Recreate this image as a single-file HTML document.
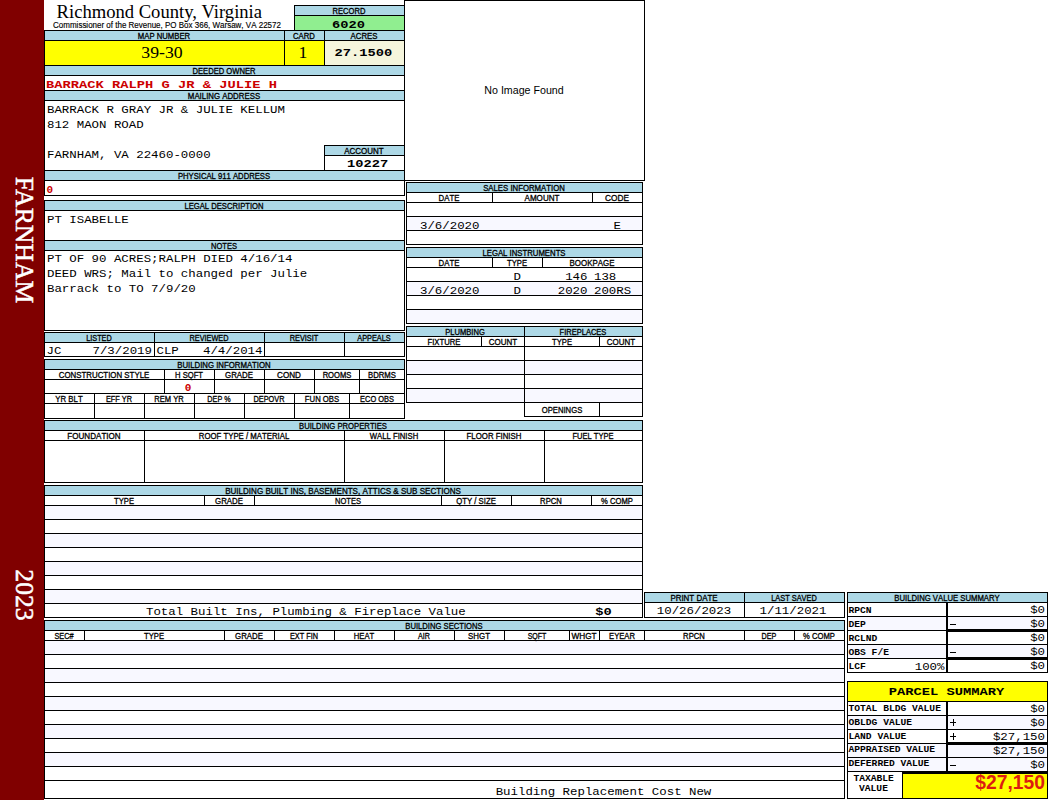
<!DOCTYPE html>
<html><head><meta charset="utf-8"><title>Property Record Card</title>
<style>
html,body{margin:0;padding:0;overflow:hidden;}
body{width:1050px;height:800px;position:relative;overflow:hidden;background:#fff;}
.r,.k,.t{position:absolute;}
.k{background:#000;}
.t{line-height:0;white-space:nowrap;color:#000;}
.s{font-family:"Liberation Sans",sans-serif;font-kerning:none;}
.sb{font-family:"Liberation Sans",sans-serif;font-weight:bold;}
.f{font-family:"Liberation Serif",serif;}
.m{font-family:"Liberation Mono",monospace;}
.mb{font-family:"Liberation Mono",monospace;font-weight:bold;}
</style></head><body>
<div class="r" style="left:0px;top:0px;width:44px;height:800px;background:#800000"></div>
<div class="t f" style="left:24px;top:240.3px;width:0;height:0;color:#fff;font-size:25.7px;"><div style="position:absolute;left:-150px;top:0;width:300px;text-align:center;line-height:0;transform:rotate(90deg);transform-origin:150px 0;white-space:nowrap;-webkit-text-stroke:0.5px #fff">FARNHAM</div></div>
<div class="t f" style="left:24px;top:595px;width:0;height:0;color:#fff;font-size:25.7px;"><div style="position:absolute;left:-150px;top:0;width:300px;text-align:center;line-height:0;transform:rotate(90deg);transform-origin:150px 0;white-space:nowrap;-webkit-text-stroke:0.5px #fff">2023</div></div>
<div class="t f" style="left:-140.7px;width:600px;text-align:center;top:11.72px;font-size:18.6px;">Richmond&nbsp;County,&nbsp;Virginia</div>
<div class="t s" style="left:-133.5px;width:600px;text-align:center;top:24.75px;font-size:8.5px;transform:scale(0.94,1);transform-origin:50% 2.95px;-webkit-text-stroke:0.15px #000;">Commissioner&nbsp;of&nbsp;the&nbsp;Revenue,&nbsp;PO&nbsp;Box&nbsp;366,&nbsp;Warsaw,&nbsp;VA&nbsp;22572</div>
<div class="r" style="left:295px;top:6px;width:109px;height:9px;background:#add8e6"></div>
<div class="r" style="left:295px;top:16px;width:109px;height:14px;background:#90ee90"></div>
<div class="k" style="left:294px;top:5px;width:111px;height:1px"></div>
<div class="k" style="left:294px;top:15px;width:111px;height:1px"></div>
<div class="k" style="left:294px;top:5px;width:1px;height:26px"></div>
<div class="t s" style="left:49.0px;width:600px;text-align:center;top:11.09px;font-size:8.4px;transform:scale(0.907,1);transform-origin:50% 2.91px;-webkit-text-stroke:0.3px #000;">RECORD</div>
<div class="t mb" style="left:48.5px;width:600px;text-align:center;top:24.74px;font-size:13.75px;transform:scale(1,0.8);transform-origin:50% 3.66px;">6020</div>
<div class="r" style="left:45px;top:31px;width:359px;height:9px;background:#add8e6"></div>
<div class="r" style="left:45px;top:41px;width:239px;height:24px;background:#ffff00"></div>
<div class="r" style="left:285px;top:41px;width:39px;height:24px;background:#ffff00"></div>
<div class="r" style="left:325px;top:41px;width:79px;height:24px;background:#f5f5dc"></div>
<div class="k" style="left:44px;top:30px;width:361px;height:1px"></div>
<div class="k" style="left:44px;top:40px;width:361px;height:1px"></div>
<div class="k" style="left:44px;top:65px;width:361px;height:1px"></div>
<div class="k" style="left:284px;top:30px;width:1px;height:36px"></div>
<div class="k" style="left:324px;top:30px;width:1px;height:36px"></div>
<div class="t s" style="left:-136.0px;width:600px;text-align:center;top:36.09px;font-size:8.4px;transform:scale(0.923,1);transform-origin:50% 2.91px;-webkit-text-stroke:0.3px #000;">MAP&nbsp;NUMBER</div>
<div class="t s" style="left:4.0px;width:600px;text-align:center;top:36.09px;font-size:8.4px;transform:scale(0.924,1);transform-origin:50% 2.91px;-webkit-text-stroke:0.3px #000;">CARD</div>
<div class="t s" style="left:64.0px;width:600px;text-align:center;top:36.09px;font-size:8.4px;transform:scale(0.933,1);transform-origin:50% 2.91px;-webkit-text-stroke:0.3px #000;">ACRES</div>
<div class="t f" style="left:-138px;width:600px;text-align:center;top:51.53px;font-size:17.7px;">39-30</div>
<div class="t f" style="left:3px;width:600px;text-align:center;top:51.53px;font-size:17.7px;">1</div>
<div class="t mb" style="left:63.5px;width:600px;text-align:center;top:52.74px;font-size:13.75px;transform:scale(1,0.8);transform-origin:50% 3.66px;">27.1500</div>
<div class="r" style="left:45px;top:66px;width:359px;height:9px;background:#add8e6"></div>
<div class="k" style="left:44px;top:75px;width:361px;height:1px"></div>
<div class="k" style="left:44px;top:90px;width:361px;height:1px"></div>
<div class="t s" style="left:-76.0px;width:600px;text-align:center;top:71.09px;font-size:8.4px;transform:scale(0.909,1);transform-origin:50% 2.91px;-webkit-text-stroke:0.3px #000;">DEEDED&nbsp;OWNER</div>
<div class="t mb" style="left:46px;top:84.74px;font-size:13.75px;transform:scale(1,0.8);transform-origin:0 3.66px;color:#cc0000">BARRACK&nbsp;RALPH&nbsp;G&nbsp;JR&nbsp;&amp;&nbsp;JULIE&nbsp;H</div>
<div class="r" style="left:45px;top:91px;width:359px;height:9px;background:#add8e6"></div>
<div class="k" style="left:44px;top:100px;width:361px;height:1px"></div>
<div class="t s" style="left:-76.0px;width:600px;text-align:center;top:96.09px;font-size:8.4px;transform:scale(0.935,1);transform-origin:50% 2.91px;-webkit-text-stroke:0.3px #000;">MAILING&nbsp;ADDRESS</div>
<div class="t m" style="left:47px;top:109.70px;font-size:12.4px;transform:scale(1,0.95);transform-origin:0 3.30px;">BARRACK&nbsp;R&nbsp;GRAY&nbsp;JR&nbsp;&amp;&nbsp;JULIE&nbsp;KELLUM</div>
<div class="t m" style="left:47px;top:124.70px;font-size:12.4px;transform:scale(1,0.95);transform-origin:0 3.30px;">812&nbsp;MAON&nbsp;ROAD</div>
<div class="t m" style="left:47px;top:154.70px;font-size:12.4px;transform:scale(1,0.95);transform-origin:0 3.30px;">FARNHAM,&nbsp;VA&nbsp;22460-0000</div>
<div class="r" style="left:325px;top:146px;width:79px;height:9px;background:#add8e6"></div>
<div class="k" style="left:324px;top:145px;width:81px;height:1px"></div>
<div class="k" style="left:324px;top:155px;width:81px;height:1px"></div>
<div class="k" style="left:324px;top:145px;width:1px;height:26px"></div>
<div class="t s" style="left:64.0px;width:600px;text-align:center;top:151.09px;font-size:8.4px;transform:scale(0.953,1);transform-origin:50% 2.91px;-webkit-text-stroke:0.3px #000;">ACCOUNT</div>
<div class="t mb" style="left:67.60000000000002px;width:600px;text-align:center;top:164.24px;font-size:13.75px;transform:scale(1,0.8);transform-origin:50% 3.66px;">10227</div>
<div class="r" style="left:45px;top:171px;width:359px;height:9px;background:#add8e6"></div>
<div class="k" style="left:44px;top:170px;width:361px;height:1px"></div>
<div class="k" style="left:44px;top:180px;width:361px;height:1px"></div>
<div class="k" style="left:44px;top:195px;width:361px;height:1px"></div>
<div class="t s" style="left:-76.0px;width:600px;text-align:center;top:176.09px;font-size:8.4px;transform:scale(0.917,1);transform-origin:50% 2.91px;-webkit-text-stroke:0.3px #000;">PHYSICAL&nbsp;911&nbsp;ADDRESS</div>
<div class="t mb" style="left:46.5px;top:189.56px;font-size:11.02px;color:#cc0000">0</div>
<div class="k" style="left:44px;top:30px;width:1px;height:166px"></div>
<div class="k" style="left:404px;top:5px;width:1px;height:191px"></div>
<div class="r" style="left:45px;top:201px;width:359px;height:9px;background:#add8e6"></div>
<div class="r" style="left:45px;top:241px;width:359px;height:9px;background:#add8e6"></div>
<div class="k" style="left:44px;top:200px;width:361px;height:1px"></div>
<div class="k" style="left:44px;top:210px;width:361px;height:1px"></div>
<div class="k" style="left:44px;top:240px;width:361px;height:1px"></div>
<div class="k" style="left:44px;top:250px;width:361px;height:1px"></div>
<div class="k" style="left:44px;top:330px;width:361px;height:1px"></div>
<div class="k" style="left:44px;top:200px;width:1px;height:131px"></div>
<div class="k" style="left:404px;top:200px;width:1px;height:131px"></div>
<div class="t s" style="left:-76.0px;width:600px;text-align:center;top:206.09px;font-size:8.4px;transform:scale(0.915,1);transform-origin:50% 2.91px;-webkit-text-stroke:0.3px #000;">LEGAL&nbsp;DESCRIPTION</div>
<div class="t s" style="left:-76.0px;width:600px;text-align:center;top:246.09px;font-size:8.4px;transform:scale(0.898,1);transform-origin:50% 2.91px;-webkit-text-stroke:0.3px #000;">NOTES</div>
<div class="t m" style="left:47px;top:219.70px;font-size:12.4px;transform:scale(1,0.95);transform-origin:0 3.30px;">PT&nbsp;ISABELLE</div>
<div class="t m" style="left:47px;top:259.30px;font-size:12.4px;transform:scale(1,0.95);transform-origin:0 3.30px;">PT&nbsp;OF&nbsp;90&nbsp;ACRES;RALPH&nbsp;DIED&nbsp;4/16/14</div>
<div class="t m" style="left:47px;top:274.30px;font-size:12.4px;transform:scale(1,0.95);transform-origin:0 3.30px;">DEED&nbsp;WRS;&nbsp;Mail&nbsp;to&nbsp;changed&nbsp;per&nbsp;Julie</div>
<div class="t m" style="left:47px;top:289.30px;font-size:12.4px;transform:scale(1,0.95);transform-origin:0 3.30px;">Barrack&nbsp;to&nbsp;TO&nbsp;7/9/20</div>
<div class="r" style="left:45px;top:333px;width:359px;height:9px;background:#add8e6"></div>
<div class="k" style="left:44px;top:332px;width:361px;height:1px"></div>
<div class="k" style="left:44px;top:342px;width:361px;height:1px"></div>
<div class="k" style="left:44px;top:356px;width:361px;height:1px"></div>
<div class="k" style="left:44px;top:332px;width:1px;height:25px"></div>
<div class="k" style="left:154px;top:332px;width:1px;height:25px"></div>
<div class="k" style="left:264px;top:332px;width:1px;height:25px"></div>
<div class="k" style="left:344px;top:332px;width:1px;height:25px"></div>
<div class="k" style="left:404px;top:332px;width:1px;height:25px"></div>
<div class="t s" style="left:-201.0px;width:600px;text-align:center;top:338.09px;font-size:8.4px;transform:scale(0.87,1);transform-origin:50% 2.91px;-webkit-text-stroke:0.3px #000;">LISTED</div>
<div class="t s" style="left:-91.0px;width:600px;text-align:center;top:338.09px;font-size:8.4px;transform:scale(0.875,1);transform-origin:50% 2.91px;-webkit-text-stroke:0.3px #000;">REVIEWED</div>
<div class="t s" style="left:4.0px;width:600px;text-align:center;top:338.09px;font-size:8.4px;transform:scale(0.881,1);transform-origin:50% 2.91px;-webkit-text-stroke:0.3px #000;">REVISIT</div>
<div class="t s" style="left:74.0px;width:600px;text-align:center;top:338.09px;font-size:8.4px;transform:scale(0.877,1);transform-origin:50% 2.91px;-webkit-text-stroke:0.3px #000;">APPEALS</div>
<div class="t m" style="left:46.5px;top:350.70px;font-size:12.4px;transform:scale(1,0.95);transform-origin:0 3.30px;">JC</div>
<div class="t m" style="left:-448px;width:600px;text-align:right;top:350.70px;font-size:12.4px;transform:scale(1,0.95);transform-origin:100% 3.30px;">7/3/2019</div>
<div class="t m" style="left:156.5px;top:350.70px;font-size:12.4px;transform:scale(1,0.95);transform-origin:0 3.30px;">CLP</div>
<div class="t m" style="left:-337.5px;width:600px;text-align:right;top:350.70px;font-size:12.4px;transform:scale(1,0.95);transform-origin:100% 3.30px;">4/4/2014</div>
<div class="r" style="left:45px;top:360px;width:359px;height:9px;background:#add8e6"></div>
<div class="k" style="left:44px;top:359px;width:361px;height:1px"></div>
<div class="k" style="left:44px;top:369px;width:361px;height:1px"></div>
<div class="k" style="left:44px;top:379px;width:361px;height:1px"></div>
<div class="k" style="left:44px;top:393px;width:361px;height:1px"></div>
<div class="k" style="left:44px;top:403px;width:361px;height:1px"></div>
<div class="k" style="left:44px;top:418px;width:361px;height:1px"></div>
<div class="k" style="left:44px;top:369px;width:1px;height:25px"></div>
<div class="k" style="left:164px;top:369px;width:1px;height:25px"></div>
<div class="k" style="left:214px;top:369px;width:1px;height:25px"></div>
<div class="k" style="left:264px;top:369px;width:1px;height:25px"></div>
<div class="k" style="left:314px;top:369px;width:1px;height:25px"></div>
<div class="k" style="left:359px;top:369px;width:1px;height:25px"></div>
<div class="k" style="left:404px;top:369px;width:1px;height:25px"></div>
<div class="k" style="left:44px;top:393px;width:1px;height:26px"></div>
<div class="k" style="left:94px;top:393px;width:1px;height:26px"></div>
<div class="k" style="left:144px;top:393px;width:1px;height:26px"></div>
<div class="k" style="left:194px;top:393px;width:1px;height:26px"></div>
<div class="k" style="left:244px;top:393px;width:1px;height:26px"></div>
<div class="k" style="left:294px;top:393px;width:1px;height:26px"></div>
<div class="k" style="left:349px;top:393px;width:1px;height:26px"></div>
<div class="k" style="left:404px;top:393px;width:1px;height:26px"></div>
<div class="k" style="left:44px;top:359px;width:1px;height:60px"></div>
<div class="k" style="left:404px;top:359px;width:1px;height:60px"></div>
<div class="t s" style="left:-76.0px;width:600px;text-align:center;top:365.09px;font-size:8.4px;transform:scale(0.93,1);transform-origin:50% 2.91px;-webkit-text-stroke:0.3px #000;">BUILDING&nbsp;INFORMATION</div>
<div class="t s" style="left:-196.0px;width:600px;text-align:center;top:375.09px;font-size:8.4px;transform:scale(0.94,1);transform-origin:50% 2.91px;-webkit-text-stroke:0.3px #000;">CONSTRUCTION&nbsp;STYLE</div>
<div class="t s" style="left:-111.0px;width:600px;text-align:center;top:375.09px;font-size:8.4px;transform:scale(0.909,1);transform-origin:50% 2.91px;-webkit-text-stroke:0.3px #000;">H&nbsp;SQFT</div>
<div class="t s" style="left:-61.0px;width:600px;text-align:center;top:375.09px;font-size:8.4px;transform:scale(0.937,1);transform-origin:50% 2.91px;-webkit-text-stroke:0.3px #000;">GRADE</div>
<div class="t s" style="left:-11.0px;width:600px;text-align:center;top:375.09px;font-size:8.4px;transform:scale(0.97,1);transform-origin:50% 2.91px;-webkit-text-stroke:0.3px #000;">COND</div>
<div class="t s" style="left:36.5px;width:600px;text-align:center;top:375.09px;font-size:8.4px;transform:scale(0.908,1);transform-origin:50% 2.91px;-webkit-text-stroke:0.3px #000;">ROOMS</div>
<div class="t s" style="left:81.5px;width:600px;text-align:center;top:375.09px;font-size:8.4px;transform:scale(0.923,1);transform-origin:50% 2.91px;-webkit-text-stroke:0.3px #000;">BDRMS</div>
<div class="t s" style="left:-231.0px;width:600px;text-align:center;top:399.09px;font-size:8.4px;transform:scale(0.931,1);transform-origin:50% 2.91px;-webkit-text-stroke:0.3px #000;">YR&nbsp;BLT</div>
<div class="t s" style="left:-181.0px;width:600px;text-align:center;top:399.09px;font-size:8.4px;transform:scale(0.875,1);transform-origin:50% 2.91px;-webkit-text-stroke:0.3px #000;">EFF&nbsp;YR</div>
<div class="t s" style="left:-131.0px;width:600px;text-align:center;top:399.09px;font-size:8.4px;transform:scale(0.898,1);transform-origin:50% 2.91px;-webkit-text-stroke:0.3px #000;">REM&nbsp;YR</div>
<div class="t s" style="left:-81.0px;width:600px;text-align:center;top:399.09px;font-size:8.4px;transform:scale(0.862,1);transform-origin:50% 2.91px;-webkit-text-stroke:0.3px #000;">DEP&nbsp;%</div>
<div class="t s" style="left:-31.0px;width:600px;text-align:center;top:399.09px;font-size:8.4px;transform:scale(0.879,1);transform-origin:50% 2.91px;-webkit-text-stroke:0.3px #000;">DEPOVR</div>
<div class="t s" style="left:21.5px;width:600px;text-align:center;top:399.09px;font-size:8.4px;transform:scale(0.921,1);transform-origin:50% 2.91px;-webkit-text-stroke:0.3px #000;">FUN&nbsp;OBS</div>
<div class="t s" style="left:76.5px;width:600px;text-align:center;top:399.09px;font-size:8.4px;transform:scale(0.888,1);transform-origin:50% 2.91px;-webkit-text-stroke:0.3px #000;">ECO&nbsp;OBS</div>
<div class="t mb" style="left:-112px;width:600px;text-align:center;top:387.56px;font-size:11.02px;color:#cc0000">0</div>
<div class="r" style="left:45px;top:421px;width:597px;height:9px;background:#add8e6"></div>
<div class="k" style="left:44px;top:420px;width:599px;height:1px"></div>
<div class="k" style="left:44px;top:430px;width:599px;height:1px"></div>
<div class="k" style="left:44px;top:440px;width:599px;height:1px"></div>
<div class="k" style="left:44px;top:482px;width:599px;height:1px"></div>
<div class="k" style="left:44px;top:420px;width:1px;height:63px"></div>
<div class="k" style="left:642px;top:420px;width:1px;height:63px"></div>
<div class="k" style="left:144px;top:430px;width:1px;height:53px"></div>
<div class="k" style="left:344px;top:430px;width:1px;height:53px"></div>
<div class="k" style="left:444px;top:430px;width:1px;height:53px"></div>
<div class="k" style="left:544px;top:430px;width:1px;height:53px"></div>
<div class="t s" style="left:43.0px;width:600px;text-align:center;top:426.09px;font-size:8.4px;transform:scale(0.917,1);transform-origin:50% 2.91px;-webkit-text-stroke:0.3px #000;">BUILDING&nbsp;PROPERTIES</div>
<div class="t s" style="left:-206.0px;width:600px;text-align:center;top:436.09px;font-size:8.4px;transform:scale(0.962,1);transform-origin:50% 2.91px;-webkit-text-stroke:0.3px #000;">FOUNDATION</div>
<div class="t s" style="left:-56.0px;width:600px;text-align:center;top:436.09px;font-size:8.4px;transform:scale(0.93,1);transform-origin:50% 2.91px;-webkit-text-stroke:0.3px #000;">ROOF&nbsp;TYPE&nbsp;/&nbsp;MATERIAL</div>
<div class="t s" style="left:94.0px;width:600px;text-align:center;top:436.09px;font-size:8.4px;transform:scale(0.921,1);transform-origin:50% 2.91px;-webkit-text-stroke:0.3px #000;">WALL&nbsp;FINISH</div>
<div class="t s" style="left:194.0px;width:600px;text-align:center;top:436.09px;font-size:8.4px;transform:scale(0.935,1);transform-origin:50% 2.91px;-webkit-text-stroke:0.3px #000;">FLOOR&nbsp;FINISH</div>
<div class="t s" style="left:293.0px;width:600px;text-align:center;top:436.09px;font-size:8.4px;transform:scale(0.899,1);transform-origin:50% 2.91px;-webkit-text-stroke:0.3px #000;">FUEL&nbsp;TYPE</div>
<div class="r" style="left:45px;top:486px;width:597px;height:9px;background:#add8e6"></div>
<div class="r" style="left:45px;top:506px;width:597px;height:13px;background:#f8f8ff"></div>
<div class="r" style="left:45px;top:534px;width:597px;height:13px;background:#f8f8ff"></div>
<div class="r" style="left:45px;top:562px;width:597px;height:13px;background:#f8f8ff"></div>
<div class="r" style="left:45px;top:590px;width:597px;height:13px;background:#f8f8ff"></div>
<div class="k" style="left:44px;top:485px;width:599px;height:1px"></div>
<div class="k" style="left:44px;top:495px;width:599px;height:1px"></div>
<div class="k" style="left:44px;top:505px;width:599px;height:1px"></div>
<div class="k" style="left:44px;top:519px;width:599px;height:1px"></div>
<div class="k" style="left:44px;top:533px;width:599px;height:1px"></div>
<div class="k" style="left:44px;top:547px;width:599px;height:1px"></div>
<div class="k" style="left:44px;top:561px;width:599px;height:1px"></div>
<div class="k" style="left:44px;top:575px;width:599px;height:1px"></div>
<div class="k" style="left:44px;top:589px;width:599px;height:1px"></div>
<div class="k" style="left:44px;top:603px;width:599px;height:1px"></div>
<div class="k" style="left:44px;top:617px;width:599px;height:1px"></div>
<div class="k" style="left:44px;top:485px;width:1px;height:133px"></div>
<div class="k" style="left:642px;top:485px;width:1px;height:133px"></div>
<div class="k" style="left:204px;top:495px;width:1px;height:11px"></div>
<div class="k" style="left:254px;top:495px;width:1px;height:11px"></div>
<div class="k" style="left:441px;top:495px;width:1px;height:11px"></div>
<div class="k" style="left:511px;top:495px;width:1px;height:11px"></div>
<div class="k" style="left:591px;top:495px;width:1px;height:11px"></div>
<div class="t s" style="left:43.0px;width:600px;text-align:center;top:491.09px;font-size:8.4px;transform:scale(0.961,1);transform-origin:50% 2.91px;-webkit-text-stroke:0.3px #000;">BUILDING&nbsp;BUILT&nbsp;INS,&nbsp;BASEMENTS,&nbsp;ATTICS&nbsp;&amp;&nbsp;SUB&nbsp;SECTIONS</div>
<div class="t s" style="left:-176.0px;width:600px;text-align:center;top:501.09px;font-size:8.4px;transform:scale(0.912,1);transform-origin:50% 2.91px;-webkit-text-stroke:0.3px #000;">TYPE</div>
<div class="t s" style="left:-71.0px;width:600px;text-align:center;top:501.09px;font-size:8.4px;transform:scale(0.937,1);transform-origin:50% 2.91px;-webkit-text-stroke:0.3px #000;">GRADE</div>
<div class="t s" style="left:47.5px;width:600px;text-align:center;top:501.09px;font-size:8.4px;transform:scale(0.898,1);transform-origin:50% 2.91px;-webkit-text-stroke:0.3px #000;">NOTES</div>
<div class="t s" style="left:176.0px;width:600px;text-align:center;top:501.09px;font-size:8.4px;transform:scale(0.925,1);transform-origin:50% 2.91px;-webkit-text-stroke:0.3px #000;">QTY&nbsp;/&nbsp;SIZE</div>
<div class="t s" style="left:251.0px;width:600px;text-align:center;top:501.09px;font-size:8.4px;transform:scale(0.916,1);transform-origin:50% 2.91px;-webkit-text-stroke:0.3px #000;">RPCN</div>
<div class="t s" style="left:316.5px;width:600px;text-align:center;top:501.09px;font-size:8.4px;transform:scale(0.914,1);transform-origin:50% 2.91px;-webkit-text-stroke:0.3px #000;">%&nbsp;COMP</div>
<div class="t m" style="left:146px;top:611.70px;font-size:12.4px;transform:scale(1,0.95);transform-origin:0 3.30px;">Total&nbsp;Built&nbsp;Ins,&nbsp;Plumbing&nbsp;&amp;&nbsp;Fireplace&nbsp;Value</div>
<div class="t mb" style="left:303.6px;width:600px;text-align:center;top:611.74px;font-size:13.75px;transform:scale(1,0.8);transform-origin:50% 3.66px;">$0</div>
<div class="k" style="left:404px;top:0px;width:241px;height:1px"></div>
<div class="k" style="left:404px;top:180px;width:241px;height:1px"></div>
<div class="k" style="left:404px;top:0px;width:1px;height:181px"></div>
<div class="k" style="left:644px;top:0px;width:1px;height:181px"></div>
<div class="t s" style="left:224px;width:600px;text-align:center;top:90.30px;font-size:10.67px;">No&nbsp;Image&nbsp;Found</div>
<div class="r" style="left:407px;top:183px;width:235px;height:9px;background:#add8e6"></div>
<div class="r" style="left:407px;top:217px;width:235px;height:13px;background:#f8f8ff"></div>
<div class="k" style="left:406px;top:182px;width:237px;height:1px"></div>
<div class="k" style="left:406px;top:192px;width:237px;height:1px"></div>
<div class="k" style="left:406px;top:202px;width:237px;height:1px"></div>
<div class="k" style="left:406px;top:216px;width:237px;height:1px"></div>
<div class="k" style="left:406px;top:230px;width:237px;height:1px"></div>
<div class="k" style="left:406px;top:244px;width:237px;height:1px"></div>
<div class="k" style="left:406px;top:182px;width:1px;height:63px"></div>
<div class="k" style="left:642px;top:182px;width:1px;height:63px"></div>
<div class="k" style="left:492px;top:192px;width:1px;height:11px"></div>
<div class="k" style="left:592px;top:192px;width:1px;height:11px"></div>
<div class="t s" style="left:224.0px;width:600px;text-align:center;top:188.09px;font-size:8.4px;transform:scale(0.929,1);transform-origin:50% 2.91px;-webkit-text-stroke:0.3px #000;">SALES&nbsp;INFORMATION</div>
<div class="t s" style="left:149.0px;width:600px;text-align:center;top:198.09px;font-size:8.4px;transform:scale(0.932,1);transform-origin:50% 2.91px;-webkit-text-stroke:0.3px #000;">DATE</div>
<div class="t s" style="left:242.0px;width:600px;text-align:center;top:198.09px;font-size:8.4px;transform:scale(0.962,1);transform-origin:50% 2.91px;-webkit-text-stroke:0.3px #000;">AMOUNT</div>
<div class="t s" style="left:317.0px;width:600px;text-align:center;top:198.09px;font-size:8.4px;transform:scale(0.989,1);transform-origin:50% 2.91px;-webkit-text-stroke:0.3px #000;">CODE</div>
<div class="t m" style="left:420px;top:225.70px;font-size:12.4px;transform:scale(1,0.95);transform-origin:0 3.30px;">3/6/2020</div>
<div class="t m" style="left:613.5px;top:225.70px;font-size:12.4px;transform:scale(1,0.95);transform-origin:0 3.30px;">E</div>
<div class="r" style="left:407px;top:248px;width:235px;height:9px;background:#add8e6"></div>
<div class="r" style="left:407px;top:282px;width:235px;height:13px;background:#f8f8ff"></div>
<div class="r" style="left:407px;top:310px;width:235px;height:13px;background:#f8f8ff"></div>
<div class="k" style="left:406px;top:247px;width:237px;height:1px"></div>
<div class="k" style="left:406px;top:257px;width:237px;height:1px"></div>
<div class="k" style="left:406px;top:267px;width:237px;height:1px"></div>
<div class="k" style="left:406px;top:281px;width:237px;height:1px"></div>
<div class="k" style="left:406px;top:295px;width:237px;height:1px"></div>
<div class="k" style="left:406px;top:309px;width:237px;height:1px"></div>
<div class="k" style="left:406px;top:323px;width:237px;height:1px"></div>
<div class="k" style="left:406px;top:247px;width:1px;height:77px"></div>
<div class="k" style="left:642px;top:247px;width:1px;height:77px"></div>
<div class="k" style="left:492px;top:257px;width:1px;height:11px"></div>
<div class="k" style="left:542px;top:257px;width:1px;height:11px"></div>
<div class="t s" style="left:224.0px;width:600px;text-align:center;top:253.09px;font-size:8.4px;transform:scale(0.925,1);transform-origin:50% 2.91px;-webkit-text-stroke:0.3px #000;">LEGAL&nbsp;INSTRUMENTS</div>
<div class="t s" style="left:149.0px;width:600px;text-align:center;top:263.09px;font-size:8.4px;transform:scale(0.932,1);transform-origin:50% 2.91px;-webkit-text-stroke:0.3px #000;">DATE</div>
<div class="t s" style="left:217.0px;width:600px;text-align:center;top:263.09px;font-size:8.4px;transform:scale(0.912,1);transform-origin:50% 2.91px;-webkit-text-stroke:0.3px #000;">TYPE</div>
<div class="t s" style="left:292.0px;width:600px;text-align:center;top:263.09px;font-size:8.4px;transform:scale(0.945,1);transform-origin:50% 2.91px;-webkit-text-stroke:0.3px #000;">BOOKPAGE</div>
<div class="t m" style="left:513.5px;top:276.70px;font-size:12.4px;transform:scale(1,0.95);transform-origin:0 3.30px;">D</div>
<div class="t m" style="left:-12.5px;width:600px;text-align:right;top:276.70px;font-size:12.4px;transform:scale(1,0.95);transform-origin:100% 3.30px;">146</div>
<div class="t m" style="left:594px;top:276.70px;font-size:12.4px;transform:scale(1,0.95);transform-origin:0 3.30px;">138</div>
<div class="t m" style="left:420px;top:290.70px;font-size:12.4px;transform:scale(1,0.95);transform-origin:0 3.30px;">3/6/2020</div>
<div class="t m" style="left:513.5px;top:290.70px;font-size:12.4px;transform:scale(1,0.95);transform-origin:0 3.30px;">D</div>
<div class="t m" style="left:-12.5px;width:600px;text-align:right;top:290.70px;font-size:12.4px;transform:scale(1,0.95);transform-origin:100% 3.30px;">2020</div>
<div class="t m" style="left:594px;top:290.70px;font-size:12.4px;transform:scale(1,0.95);transform-origin:0 3.30px;">200RS</div>
<div class="r" style="left:407px;top:327px;width:235px;height:9px;background:#add8e6"></div>
<div class="r" style="left:407px;top:361px;width:235px;height:13px;background:#f8f8ff"></div>
<div class="r" style="left:407px;top:389px;width:235px;height:13px;background:#f8f8ff"></div>
<div class="k" style="left:406px;top:326px;width:237px;height:1px"></div>
<div class="k" style="left:406px;top:336px;width:237px;height:1px"></div>
<div class="k" style="left:406px;top:346px;width:237px;height:1px"></div>
<div class="k" style="left:406px;top:360px;width:237px;height:1px"></div>
<div class="k" style="left:406px;top:374px;width:237px;height:1px"></div>
<div class="k" style="left:406px;top:388px;width:237px;height:1px"></div>
<div class="k" style="left:406px;top:402px;width:237px;height:1px"></div>
<div class="k" style="left:524px;top:416px;width:119px;height:1px"></div>
<div class="k" style="left:406px;top:326px;width:1px;height:77px"></div>
<div class="k" style="left:524px;top:326px;width:1px;height:91px"></div>
<div class="k" style="left:642px;top:326px;width:1px;height:91px"></div>
<div class="k" style="left:481px;top:336px;width:1px;height:11px"></div>
<div class="k" style="left:599px;top:336px;width:1px;height:11px"></div>
<div class="k" style="left:599px;top:402px;width:1px;height:15px"></div>
<div class="t s" style="left:165.0px;width:600px;text-align:center;top:332.09px;font-size:8.4px;transform:scale(0.905,1);transform-origin:50% 2.91px;-webkit-text-stroke:0.3px #000;">PLUMBING</div>
<div class="t s" style="left:283.0px;width:600px;text-align:center;top:332.09px;font-size:8.4px;transform:scale(0.897,1);transform-origin:50% 2.91px;-webkit-text-stroke:0.3px #000;">FIREPLACES</div>
<div class="t s" style="left:143.5px;width:600px;text-align:center;top:342.09px;font-size:8.4px;transform:scale(0.921,1);transform-origin:50% 2.91px;-webkit-text-stroke:0.3px #000;">FIXTURE</div>
<div class="t s" style="left:202.5px;width:600px;text-align:center;top:342.09px;font-size:8.4px;transform:scale(0.951,1);transform-origin:50% 2.91px;-webkit-text-stroke:0.3px #000;">COUNT</div>
<div class="t s" style="left:261.5px;width:600px;text-align:center;top:342.09px;font-size:8.4px;transform:scale(0.912,1);transform-origin:50% 2.91px;-webkit-text-stroke:0.3px #000;">TYPE</div>
<div class="t s" style="left:320.5px;width:600px;text-align:center;top:342.09px;font-size:8.4px;transform:scale(0.951,1);transform-origin:50% 2.91px;-webkit-text-stroke:0.3px #000;">COUNT</div>
<div class="t s" style="left:261.5px;width:600px;text-align:center;top:409.59px;font-size:8.4px;transform:scale(0.916,1);transform-origin:50% 2.91px;-webkit-text-stroke:0.3px #000;">OPENINGS</div>
<div class="r" style="left:645px;top:593px;width:199px;height:9px;background:#add8e6"></div>
<div class="k" style="left:644px;top:592px;width:201px;height:1px"></div>
<div class="k" style="left:644px;top:602px;width:201px;height:1px"></div>
<div class="k" style="left:644px;top:617px;width:201px;height:1px"></div>
<div class="k" style="left:644px;top:592px;width:1px;height:26px"></div>
<div class="k" style="left:744px;top:592px;width:1px;height:26px"></div>
<div class="k" style="left:844px;top:592px;width:1px;height:26px"></div>
<div class="t s" style="left:394.0px;width:600px;text-align:center;top:598.09px;font-size:8.4px;transform:scale(0.948,1);transform-origin:50% 2.91px;-webkit-text-stroke:0.3px #000;">PRINT&nbsp;DATE</div>
<div class="t s" style="left:494.0px;width:600px;text-align:center;top:598.09px;font-size:8.4px;transform:scale(0.882,1);transform-origin:50% 2.91px;-webkit-text-stroke:0.3px #000;">LAST&nbsp;SAVED</div>
<div class="t m" style="left:394px;width:600px;text-align:center;top:610.70px;font-size:12.4px;transform:scale(1,0.95);transform-origin:50% 3.30px;">10/26/2023</div>
<div class="t m" style="left:493px;width:600px;text-align:center;top:610.70px;font-size:12.4px;transform:scale(1,0.95);transform-origin:50% 3.30px;">1/11/2021</div>
<div class="r" style="left:45px;top:621px;width:799px;height:9px;background:#add8e6"></div>
<div class="r" style="left:45px;top:641px;width:799px;height:13px;background:#f8f8ff"></div>
<div class="r" style="left:45px;top:669px;width:799px;height:13px;background:#f8f8ff"></div>
<div class="r" style="left:45px;top:697px;width:799px;height:13px;background:#f8f8ff"></div>
<div class="r" style="left:45px;top:725px;width:799px;height:13px;background:#f8f8ff"></div>
<div class="r" style="left:45px;top:753px;width:799px;height:13px;background:#f8f8ff"></div>
<div class="k" style="left:44px;top:620px;width:801px;height:1px"></div>
<div class="k" style="left:44px;top:630px;width:801px;height:1px"></div>
<div class="k" style="left:44px;top:640px;width:801px;height:1px"></div>
<div class="k" style="left:44px;top:654px;width:801px;height:1px"></div>
<div class="k" style="left:44px;top:668px;width:801px;height:1px"></div>
<div class="k" style="left:44px;top:682px;width:801px;height:1px"></div>
<div class="k" style="left:44px;top:696px;width:801px;height:1px"></div>
<div class="k" style="left:44px;top:710px;width:801px;height:1px"></div>
<div class="k" style="left:44px;top:724px;width:801px;height:1px"></div>
<div class="k" style="left:44px;top:738px;width:801px;height:1px"></div>
<div class="k" style="left:44px;top:752px;width:801px;height:1px"></div>
<div class="k" style="left:44px;top:766px;width:801px;height:1px"></div>
<div class="k" style="left:44px;top:780px;width:801px;height:1px"></div>
<div class="k" style="left:44px;top:798px;width:801px;height:1px"></div>
<div class="k" style="left:44px;top:620px;width:1px;height:179px"></div>
<div class="k" style="left:844px;top:620px;width:1px;height:179px"></div>
<div class="k" style="left:84px;top:630px;width:1px;height:11px"></div>
<div class="k" style="left:224px;top:630px;width:1px;height:11px"></div>
<div class="k" style="left:274px;top:630px;width:1px;height:11px"></div>
<div class="k" style="left:334px;top:630px;width:1px;height:11px"></div>
<div class="k" style="left:394px;top:630px;width:1px;height:11px"></div>
<div class="k" style="left:454px;top:630px;width:1px;height:11px"></div>
<div class="k" style="left:504px;top:630px;width:1px;height:11px"></div>
<div class="k" style="left:569px;top:630px;width:1px;height:11px"></div>
<div class="k" style="left:599px;top:630px;width:1px;height:11px"></div>
<div class="k" style="left:644px;top:630px;width:1px;height:11px"></div>
<div class="k" style="left:744px;top:630px;width:1px;height:11px"></div>
<div class="k" style="left:794px;top:630px;width:1px;height:11px"></div>
<div class="t s" style="left:144.0px;width:600px;text-align:center;top:626.09px;font-size:8.4px;transform:scale(0.913,1);transform-origin:50% 2.91px;-webkit-text-stroke:0.3px #000;">BUILDING&nbsp;SECTIONS</div>
<div class="t s" style="left:-236.0px;width:600px;text-align:center;top:636.09px;font-size:8.4px;transform:scale(0.875,1);transform-origin:50% 2.91px;-webkit-text-stroke:0.3px #000;">SEC#</div>
<div class="t s" style="left:-146.0px;width:600px;text-align:center;top:636.09px;font-size:8.4px;transform:scale(0.912,1);transform-origin:50% 2.91px;-webkit-text-stroke:0.3px #000;">TYPE</div>
<div class="t s" style="left:-51.0px;width:600px;text-align:center;top:636.09px;font-size:8.4px;transform:scale(0.937,1);transform-origin:50% 2.91px;-webkit-text-stroke:0.3px #000;">GRADE</div>
<div class="t s" style="left:4.0px;width:600px;text-align:center;top:636.09px;font-size:8.4px;transform:scale(0.874,1);transform-origin:50% 2.91px;-webkit-text-stroke:0.3px #000;">EXT&nbsp;FIN</div>
<div class="t s" style="left:64.0px;width:600px;text-align:center;top:636.09px;font-size:8.4px;transform:scale(0.918,1);transform-origin:50% 2.91px;-webkit-text-stroke:0.3px #000;">HEAT</div>
<div class="t s" style="left:124.0px;width:600px;text-align:center;top:636.09px;font-size:8.4px;transform:scale(0.857,1);transform-origin:50% 2.91px;-webkit-text-stroke:0.3px #000;">AIR</div>
<div class="t s" style="left:179.0px;width:600px;text-align:center;top:636.09px;font-size:8.4px;transform:scale(0.943,1);transform-origin:50% 2.91px;-webkit-text-stroke:0.3px #000;">SHGT</div>
<div class="t s" style="left:236.5px;width:600px;text-align:center;top:636.09px;font-size:8.4px;transform:scale(0.839,1);transform-origin:50% 2.91px;-webkit-text-stroke:0.3px #000;">SQFT</div>
<div class="t s" style="left:284.0px;width:600px;text-align:center;top:636.09px;font-size:8.4px;transform:scale(0.982,1);transform-origin:50% 2.91px;-webkit-text-stroke:0.3px #000;">WHGT</div>
<div class="t s" style="left:321.5px;width:600px;text-align:center;top:636.09px;font-size:8.4px;transform:scale(0.913,1);transform-origin:50% 2.91px;-webkit-text-stroke:0.3px #000;">EYEAR</div>
<div class="t s" style="left:394.0px;width:600px;text-align:center;top:636.09px;font-size:8.4px;transform:scale(0.916,1);transform-origin:50% 2.91px;-webkit-text-stroke:0.3px #000;">RPCN</div>
<div class="t s" style="left:469.0px;width:600px;text-align:center;top:636.09px;font-size:8.4px;transform:scale(0.857,1);transform-origin:50% 2.91px;-webkit-text-stroke:0.3px #000;">DEP</div>
<div class="t s" style="left:519.0px;width:600px;text-align:center;top:636.09px;font-size:8.4px;transform:scale(0.914,1);transform-origin:50% 2.91px;-webkit-text-stroke:0.3px #000;">%&nbsp;COMP</div>
<div class="t m" style="left:303.5px;width:600px;text-align:center;top:791.70px;font-size:12.4px;transform:scale(1,0.95);transform-origin:50% 3.30px;">Building&nbsp;Replacement&nbsp;Cost&nbsp;New</div>
<div class="r" style="left:848px;top:593px;width:199px;height:9px;background:#add8e6"></div>
<div class="r" style="left:848px;top:617px;width:199px;height:13px;background:#f8f8ff"></div>
<div class="r" style="left:848px;top:645px;width:199px;height:13px;background:#f8f8ff"></div>
<div class="k" style="left:847px;top:592px;width:201px;height:1px"></div>
<div class="k" style="left:847px;top:602px;width:201px;height:1px"></div>
<div class="k" style="left:847px;top:616px;width:201px;height:1px"></div>
<div class="k" style="left:847px;top:630px;width:201px;height:1px"></div>
<div class="k" style="left:847px;top:644px;width:201px;height:1px"></div>
<div class="k" style="left:847px;top:658px;width:201px;height:1px"></div>
<div class="k" style="left:847px;top:672px;width:201px;height:1px"></div>
<div class="k" style="left:947px;top:629px;width:101px;height:3px"></div>
<div class="k" style="left:947px;top:657px;width:101px;height:3px"></div>
<div class="k" style="left:847px;top:592px;width:1px;height:81px"></div>
<div class="k" style="left:1047px;top:592px;width:1px;height:81px"></div>
<div class="k" style="left:946px;top:602px;width:2px;height:71px"></div>
<div class="t s" style="left:647.0px;width:600px;text-align:center;top:598.09px;font-size:8.4px;transform:scale(0.921,1);transform-origin:50% 2.91px;-webkit-text-stroke:0.3px #000;">BUILDING&nbsp;VALUE&nbsp;SUMMARY</div>
<div class="t mb" style="left:848.5px;top:611.43px;font-size:9.64px;">RPCN</div>
<div class="t m" style="left:445px;width:600px;text-align:right;top:610.20px;font-size:12.4px;transform:scale(1,0.95);transform-origin:100% 3.30px;">$0</div>
<div class="t mb" style="left:848.5px;top:625.43px;font-size:9.64px;">DEP</div>
<div class="t m" style="left:445px;width:600px;text-align:right;top:624.20px;font-size:12.4px;transform:scale(1,0.95);transform-origin:100% 3.30px;">$0</div>
<div class="t mb" style="left:848.5px;top:639.43px;font-size:9.64px;">RCLND</div>
<div class="t m" style="left:445px;width:600px;text-align:right;top:638.20px;font-size:12.4px;transform:scale(1,0.95);transform-origin:100% 3.30px;">$0</div>
<div class="t mb" style="left:848.5px;top:653.43px;font-size:9.64px;">OBS&nbsp;F/E</div>
<div class="t m" style="left:445px;width:600px;text-align:right;top:652.20px;font-size:12.4px;transform:scale(1,0.95);transform-origin:100% 3.30px;">$0</div>
<div class="t mb" style="left:848.5px;top:667.43px;font-size:9.64px;">LCF</div>
<div class="t m" style="left:445px;width:600px;text-align:right;top:666.20px;font-size:12.4px;transform:scale(1,0.95);transform-origin:100% 3.30px;">$0</div>
<div class="t m" style="left:344.5px;width:600px;text-align:right;top:666.70px;font-size:12.4px;transform:scale(1,0.95);transform-origin:100% 3.30px;">100%</div>
<div class="k" style="left:950px;top:624px;width:6px;height:1px"></div>
<div class="k" style="left:950px;top:652px;width:6px;height:1px"></div>
<div class="r" style="left:848px;top:682px;width:199px;height:19px;background:#ffff00"></div>
<div class="r" style="left:848px;top:716px;width:199px;height:13px;background:#f8f8ff"></div>
<div class="r" style="left:848px;top:744px;width:199px;height:13px;background:#f8f8ff"></div>
<div class="r" style="left:848px;top:758px;width:199px;height:13px;background:#f8f8ff"></div>
<div class="r" style="left:903px;top:774px;width:144px;height:24px;background:#ffff00"></div>
<div class="k" style="left:847px;top:681px;width:201px;height:1px"></div>
<div class="k" style="left:847px;top:701px;width:201px;height:1px"></div>
<div class="k" style="left:847px;top:715px;width:201px;height:1px"></div>
<div class="k" style="left:847px;top:729px;width:201px;height:1px"></div>
<div class="k" style="left:847px;top:757px;width:201px;height:1px"></div>
<div class="k" style="left:847px;top:798px;width:201px;height:1px"></div>
<div class="k" style="left:947px;top:742px;width:101px;height:3px"></div>
<div class="k" style="left:847px;top:743px;width:100px;height:1px"></div>
<div class="k" style="left:847px;top:771px;width:201px;height:1px"></div>
<div class="k" style="left:902px;top:771px;width:146px;height:3px"></div>
<div class="k" style="left:847px;top:681px;width:1px;height:118px"></div>
<div class="k" style="left:1047px;top:681px;width:1px;height:118px"></div>
<div class="k" style="left:946px;top:701px;width:2px;height:72px"></div>
<div class="k" style="left:902px;top:771px;width:1px;height:28px"></div>
<div class="t mb" style="left:646.5px;width:600px;text-align:center;top:691.74px;font-size:13.75px;transform:scale(1,0.8);transform-origin:50% 3.66px;">PARCEL&nbsp;SUMMARY</div>
<div class="t mb" style="left:848.5px;top:709.43px;font-size:9.64px;">TOTAL&nbsp;BLDG&nbsp;VALUE</div>
<div class="t m" style="left:445px;width:600px;text-align:right;top:709.20px;font-size:12.4px;transform:scale(1,0.95);transform-origin:100% 3.30px;">$0</div>
<div class="t mb" style="left:848.5px;top:723.43px;font-size:9.64px;">OBLDG&nbsp;VALUE</div>
<div class="t m" style="left:445px;width:600px;text-align:right;top:723.20px;font-size:12.4px;transform:scale(1,0.95);transform-origin:100% 3.30px;">$0</div>
<div class="t mb" style="left:848.5px;top:737.43px;font-size:9.64px;">LAND&nbsp;VALUE</div>
<div class="t m" style="left:445px;width:600px;text-align:right;top:737.20px;font-size:12.4px;transform:scale(1,0.95);transform-origin:100% 3.30px;">$27,150</div>
<div class="t mb" style="left:848.5px;top:750.43px;font-size:9.64px;">APPRAISED&nbsp;VALUE</div>
<div class="t m" style="left:445px;width:600px;text-align:right;top:751.20px;font-size:12.4px;transform:scale(1,0.95);transform-origin:100% 3.30px;">$27,150</div>
<div class="t mb" style="left:848.5px;top:764.43px;font-size:9.64px;">DEFERRED&nbsp;VALUE</div>
<div class="t m" style="left:445px;width:600px;text-align:right;top:765.20px;font-size:12.4px;transform:scale(1,0.95);transform-origin:100% 3.30px;">$0</div>
<div class="k" style="left:950px;top:722px;width:6px;height:1px"></div>
<div class="k" style="left:953px;top:719px;width:1px;height:7px"></div>
<div class="k" style="left:950px;top:736px;width:6px;height:1px"></div>
<div class="k" style="left:953px;top:733px;width:1px;height:7px"></div>
<div class="k" style="left:950px;top:765px;width:6px;height:1px"></div>
<div class="t mb" style="left:573.7px;width:600px;text-align:center;top:779.23px;font-size:9.64px;">TAXABLE</div>
<div class="t mb" style="left:573.5px;width:600px;text-align:center;top:789.23px;font-size:9.64px;">VALUE</div>
<div class="t sb" style="left:445px;width:600px;text-align:right;top:783.31px;font-size:19.3px;color:#dc1c10">$27,150</div>
</body></html>
